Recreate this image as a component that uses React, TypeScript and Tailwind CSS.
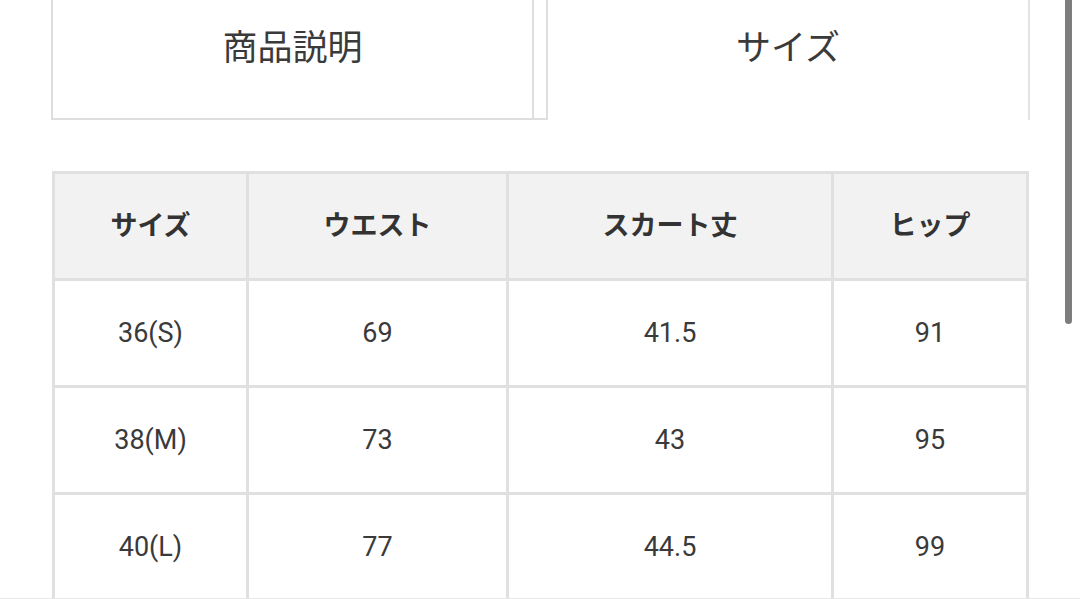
const headers = ["サイズ", "ウエスト", "スカート丈", "ヒップ"];

const rows = [
  ["36(S)", "69", "41.5", "91"],
  ["38(M)", "73", "43", "95"],
  ["40(L)", "77", "44.5", "99"],
];

const App = () => {
  return (
    <div className="relative h-[599px] w-[1080px] overflow-hidden bg-white border-b border-[#e8e8e8] font-['Roboto','Noto_Sans_CJK_JP',sans-serif] text-[#333333]">
      <div className="pl-[51px]">
        {/* tabs */}
        <div className="flex h-[120px]">
          <div className="w-[483px] flex justify-center pt-[29px] border-x-2 border-b-2 border-[#dedede]">
            <span className="text-[35px] leading-[40px] text-[#3a3a3a]">商品説明</span>
          </div>
          <div className="w-[14px] border-r-2 border-b-2 border-[#dedede]" />
          <div className="w-[482px] flex justify-center pt-[29px] border-r-2 border-[#e4e4e4]">
            <span className="text-[35px] leading-[40px] text-[#3a3a3a]">サイズ</span>
          </div>
        </div>

        {/* size table */}
        <div className="mt-[51px] ml-[1px] w-[977px] grid grid-cols-[191px_257px_322px_192px] gap-[3px] p-[3px] bg-[#e0e0e0]">
          {headers.map((h) => (
            <div key={h} className="h-[104px] bg-[#f2f2f2] flex items-center justify-center text-[27px] font-bold text-[#333333]">
              {h}
            </div>
          ))}
          {rows.map((r) =>
            r.map((c, i) => (
              <div key={r[0] + i} className="h-[104px] bg-white flex items-center justify-center text-[27px] text-[#3a3a3a]">
                {c}
              </div>
            ))
          )}
        </div>
      </div>

      {/* scrollbar */}
      <div className="absolute right-[8px] top-0 w-[7px] h-[324px] rounded-b-full bg-[#7d7d7d]" />
    </div>
  );
};

export default App;
